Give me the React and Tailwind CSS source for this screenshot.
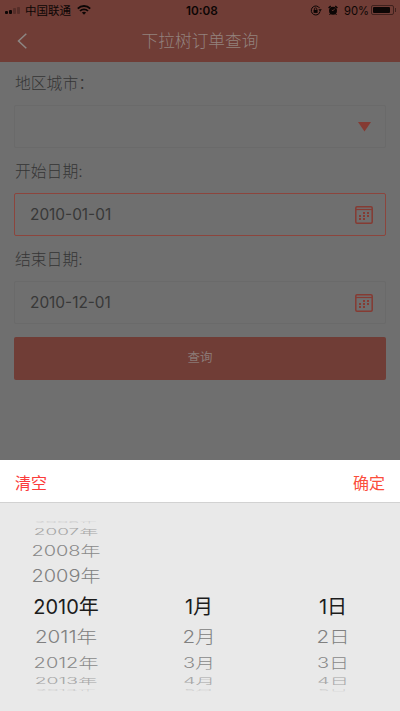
import clsx from 'clsx';

const YEARS = ['2006年', '2007年', '2008年', '2009年', '2010年', '2011年', '2012年', '2013年', '2014年'];
const MONTHS = ['', '', '', '', '1月', '2月', '3月', '4月', '5月'];
const DAYS = ['', '', '', '', '1日', '2日', '3日', '4日', '5日'];

// Rows get flatter and paler towards the edge of the wheel
const ROW_STYLES = [
  'h-[5px] text-[#cecece] scale-x-[0.92] scale-y-[0.12]',
  'h-[14px] text-[#a6a6a6] scale-x-[0.95] scale-y-[0.42]',
  'h-[23px] text-[#8a8a8a] scale-x-[1] scale-y-[0.69]',
  'h-[28px] text-[#808080] scale-x-[1] scale-y-[0.88]',
  'h-[33px] text-[#1c1c1c] font-normal',
  'h-[28px] text-[#808080] scale-x-[1.03] scale-y-[0.88]',
  'h-[23px] text-[#8a8a8a] scale-x-[1] scale-y-[0.69]',
  'h-[14px] text-[#a6a6a6] scale-x-[0.97] scale-y-[0.42]',
  'h-[5px] text-[#cecece] scale-x-[0.94] scale-y-[0.12]',
];

const StatusBar = () => (
  <div className="flex h-5 items-center pr-[4px] pl-[5px] text-[#0c0605]">
    <div className="flex h-[7px] w-[17px] items-end gap-[1px]">
      <span className="h-[3px] w-[3px] rounded-[1px] bg-[#0c0605]" />
      <span className="h-[4px] w-[3px] rounded-[1px] bg-[#0c0605]" />
      <span className="h-[6px] w-[3px] rounded-[1px] bg-[#562e29]" />
      <span className="h-[7px] w-[3px] rounded-[1px] bg-[#562e29]" />
    </div>
    <span className="ml-[3px] w-[47px] pt-px text-[11.5px] leading-5 whitespace-nowrap">中国联通</span>
    <svg className="ml-[5px] h-[10px] w-[14px]" viewBox="0 0 14 10" fill="none" stroke="currentColor" strokeWidth="1.8">
      <path d="M0.8 3.6 C4.2 0.1 9.8 0.1 13.2 3.6" />
      <path d="M3 6 C5.2 3.7 8.8 3.7 11 6" />
      <path d="M7 9.8 L4.9 7.5 C6 6.5 8 6.5 9.1 7.5 Z" fill="currentColor" stroke="none" />
    </svg>
    <span className="ml-[95px] w-[34px] pt-px text-[11.8px] leading-5 font-semibold">10:08</span>
    <svg className="ml-auto h-[11px] w-[12px]" viewBox="0 0 12 11" fill="none" stroke="currentColor">
      <path d="M9.6 3.1 A4.5 4.5 0 1 0 8.6 9" strokeWidth="1" />
      <path d="M8.2 9.3 A4.5 4.5 0 0 0 10 6.4" strokeWidth="1" />
      <path d="M8.4 4.2 H11.8 L10.1 6.4 Z" fill="currentColor" stroke="none" />
      <rect x="3.6" y="4.9" width="4" height="3" fill="currentColor" stroke="none" />
      <path d="M4.4 5 V4 A1.2 1.2 0 0 1 6.8 4 V5" strokeWidth="0.8" />
    </svg>
    <svg className="mr-px ml-[6px] h-[11px] w-[10px]" viewBox="0 0 10 11">
      <circle cx="5" cy="5.7" r="4" fill="currentColor" />
      <path d="M0.6 3 L2.7 1.1 M9.4 3 L7.3 1.1" stroke="currentColor" strokeWidth="1.4" />
      <path d="M2.4 8.7 L1.5 10 M7.6 8.7 L8.5 10" stroke="currentColor" strokeWidth="1" />
      <path d="M6.8 3.6 L5 5.8 L3.8 5.1" stroke="#703d36" strokeWidth="0.8" fill="none" />
    </svg>
    <span className="ml-[5px] w-[24px] pt-px text-[11.2px] leading-5 whitespace-nowrap">90%</span>
    <div className="ml-[3px] flex h-[10px] w-[23px] rounded-[2px] border border-[#3f211d] p-[1px]">
      <span className="w-[17px] rounded-[1px] bg-[#0c0605]" />
    </div>
    <span className="ml-[1px] h-[4px] w-[1px] bg-[#3f211d]" />
  </div>
);

const CalendarIcon = () => (
  <svg className="h-[18px] w-[18px]" viewBox="0 0 18 18" fill="none" stroke="#853b33">
    <rect x="0.8" y="0.8" width="16.4" height="16.4" rx="1.2" strokeWidth="1.5" />
    <path d="M1 3.5 H17" strokeWidth="1.2" />
    <path d="M8 7 h2 M12 7 h2 M4 10 h2 M8 10 h2 M12 10 h2 M4 13 h2 M8 13 h2" strokeWidth="1.8" />
  </svg>
);

const Field = ({ label, value, active, icon }) => (
  <div>
    <div className="flex h-[45px] items-center pt-[2px] pl-px text-[15.8px] text-[#353535]">{label}</div>
    <div
      className={clsx(
        'flex h-[43px] items-center justify-between rounded-[2px] border pr-[12px] pl-[15px]',
        active ? 'border-[#8c453d]' : 'border-[#6a6a6a]'
      )}
    >
      <span className="pt-px text-[15.4px] font-normal text-[#383838]">{value}</span>
      {icon}
    </div>
  </div>
);

const WheelColumn = ({ items, className }) => (
  <div className={clsx('flex flex-col', className)}>
    {items.map((item, i) => (
      <div key={i} className={clsx('flex items-center justify-center text-[20px] leading-none whitespace-nowrap', ROW_STYLES[i])}>
        {item}
      </div>
    ))}
  </div>
);

const App = () => {
  return (
    <div className="flex h-[711px] w-[400px] flex-col overflow-hidden bg-[#6f6f6f] font-['Inter','Noto_Sans_CJK_SC',sans-serif] font-light">
      {/* Header */}
      <header className="h-[62px] shrink-0 bg-[#703d36] font-normal">
        <StatusBar />
        <div className="grid h-[42px] grid-cols-[40px_1fr_40px] items-center">
          <svg className="ml-[17px] h-[16px] w-[11px]" viewBox="0 0 11 16" fill="none" stroke="#8d8784" strokeWidth="1.5">
            <path d="M9.3 0.8 L1.5 8 L9.3 15.2" />
          </svg>
          <h1 className="pt-[2px] text-center text-[16.7px] font-light text-[#93827e]">下拉树订单查询</h1>
        </div>
      </header>

      {/* Query form */}
      <main className="-mt-[2px] h-[400px] shrink-0 px-[14px]">
        <Field
          label="地区城市："
          icon={
            <svg className="mr-[2px] h-[10px] w-[13px]" viewBox="0 0 13 10">
              <path d="M0 0 H13 L6.5 9.5 Z" fill="#853b33" />
            </svg>
          }
        />
        <Field label="开始日期:" value="2010-01-01" active icon={<CalendarIcon />} />
        <Field label="结束日期:" value="2010-12-01" icon={<CalendarIcon />} />
        <button className="mt-[13px] h-[43px] w-full rounded-[2px] bg-[#703d36] text-[12.5px] font-normal text-[#8b7975]">查询</button>
      </main>

      {/* Date picker */}
      <section className="flex h-[251px] shrink-0 flex-col bg-[#e9e9e9]">
        <div className="flex h-[43px] items-center justify-between border-b border-[#d2d2d2] bg-white px-[15px] pt-[3px] text-[16px] font-normal">
          <button className="text-[#fb3b3b]">清空</button>
          <button className="text-[#fb4e3c]">确定</button>
        </div>
        <div className="flex pt-[17px]">
          <WheelColumn items={YEARS} className="w-[132px]" />
          <WheelColumn items={MONTHS} className="w-[134px]" />
          <WheelColumn items={DAYS} className="w-[134px]" />
        </div>
      </section>
    </div>
  );
};

export default App;
